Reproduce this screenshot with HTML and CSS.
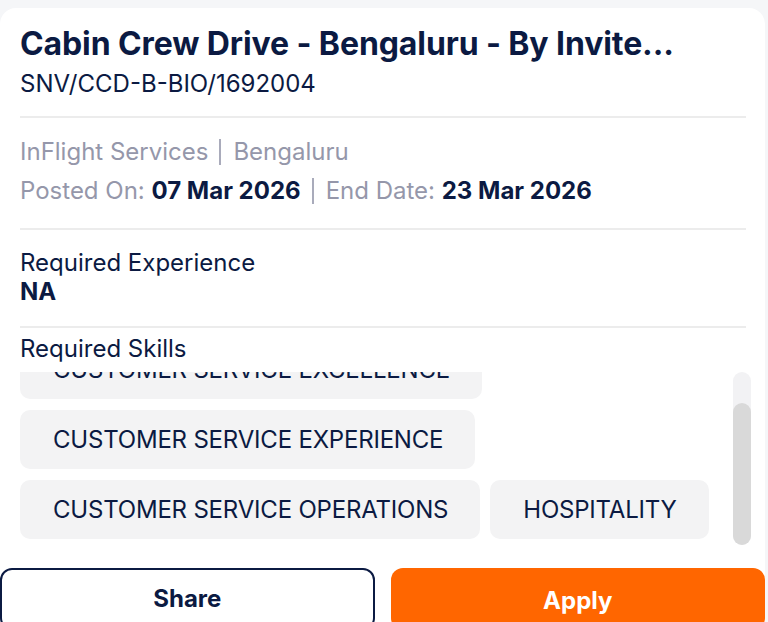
FILE: index.html
```html
<!DOCTYPE html>
<html lang="en">
<head>
<meta charset="utf-8">
<title>Job</title>
<link rel="stylesheet" href="styles.css">
</head>
<body>
<div class="card">
  <div class="head">
    <h1 class="title">Cabin Crew Drive - Bengaluru - By Invite...</h1>
    <div class="code">SNV/CCD-B-BIO/1692004</div>
  </div>
  <div class="divider"></div>
  <div class="meta">
    <div class="meta-row"><span>InFlight Services</span><span class="sep"></span><span>Bengaluru</span></div>
    <div class="meta-row"><span>Posted On: <b>07 Mar 2026</b></span><span class="sep"></span><span>End Date: <b>23 Mar 2026</b></span></div>
  </div>
  <div class="divider"></div>
  <div class="section">
    <div class="label">Required Experience</div>
    <div class="value">NA</div>
  </div>
  <div class="divider"></div>
  <div class="label skills-label">Required Skills</div>
  <div class="skills">
    <div class="skills-view">
      <div class="chips">
        <span class="chip">CUSTOMER SERVICE EXCELLENCE</span>
        <span class="chip">CUSTOMER SERVICE EXPERIENCE</span>
        <span class="chip">CUSTOMER SERVICE OPERATIONS</span>
        <span class="chip">HOSPITALITY</span>
      </div>
    </div>
    <div class="scrollbar"><div class="thumb"></div></div>
  </div>
  <div class="actions">
    <button class="btn btn-outline">Share</button>
    <button class="btn btn-primary">Apply</button>
  </div>
</div>
</body>
</html>
```

FILE: styles.css
```css
* { box-sizing: border-box; }
html, body { margin: 0; padding: 0; }
body {
  background: #f5f6f8;
  font-family: Inter, "Noto Sans", sans-serif;
  color: #0b1a42;
  height: 622px;
  overflow: hidden;
}
.card {
  margin-top: 8px;
  width: 765px;
  background: #fff;
  border-radius: 16px 16px 0 0;
  height: 640px;
}
.head { padding: 16px 20px 0 20px; }
.title {
  margin: 0;
  font-size: 32px;
  line-height: 40px;
  font-weight: 700;
  color: #0b1a42;
  white-space: nowrap;
  letter-spacing: -0.1px;
}
.code {
  margin-top: 5px;
  font-size: 24px;
  line-height: 30px;
  color: #0b1a42;
}
.divider {
  height: 2px;
  background: #ececec;
  margin: 0 19px 0 20px;
}
.head + .divider { margin-top: 17px; }
.meta { padding: 19px 20px 22px; }
.meta-row {
  display: flex;
  align-items: center;
  font-size: 24px;
  line-height: 30px;
  color: #9597aa;
  white-space: nowrap;
}
.meta-row + .meta-row { margin-top: 9px; }
.meta-row b { color: #0b1a42; font-weight: 700; }
.sep {
  display: inline-block;
  width: 2px;
  height: 26px;
  background: #a9abbb;
  margin: 0 12px 0 11px;
}
.section { padding: 18px 20px 20px; }
.label {
  font-size: 24px;
  line-height: 30px;
  color: #0b1a42;
}
.section .label { line-height: 29px; }
.value {
  font-size: 24px;
  line-height: 29px;
  font-weight: 700;
  color: #0b1a42;
}
.skills-label { padding: 6px 20px 0; }
.skills {
  display: flex;
  margin: 8px 14px 0 20px;
  height: 173px;
}
.skills-view {
  flex: 1;
  overflow: hidden;
  display: flex;
  flex-direction: column-reverse;
}
.scrollbar {
  width: 18px;
  flex: none;
  background: #f2f2f4;
  border-radius: 9px;
  display: flex;
  flex-direction: column;
  justify-content: flex-end;
}
.thumb {
  height: 142px;
  background: #d9d9d9;
  border-radius: 9px;
}
.chips {
  display: flex;
  flex-wrap: wrap;
  gap: 11px 10px;
  padding-bottom: 6px;
  flex: none;
}
.chip {
  display: inline-flex;
  align-items: center;
  height: 59px;
  padding: 0 32px 0 33px;
  background: #f3f3f4;
  border-radius: 10px;
  font-size: 24px;
  letter-spacing: -0.2px;
  color: #0b1a42;
  white-space: nowrap;
}
.actions {
  display: flex;
  gap: 16px;
  margin-top: 23px;
}
.btn {
  flex: 1 1 50%;
  height: 62px;
  border-radius: 12px;
  font-family: Inter, "Noto Sans", sans-serif;
  font-size: 24px;
  font-weight: 700;
  padding: 0 0 2px;
}
.btn-outline {
  background: #fff;
  border: 2px solid #0b1a42;
  color: #0b1a42;
}
.btn-primary {
  background: #ff6600;
  border: none;
  color: #fff;
  padding-top: 4px;
}
```
